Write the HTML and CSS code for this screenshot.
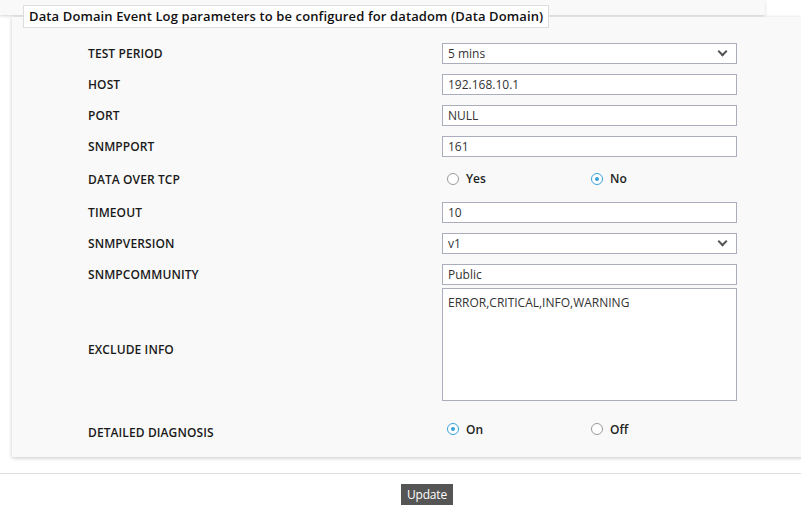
FILE: index.html
```html
<!DOCTYPE html>
<html lang="en">
<head>
    <meta charset="UTF-8">
    <title>Data Domain Event Log</title>
    <link rel="stylesheet" href="styles.css">
</head>
<body>
    <div class="prev-panel"></div>

    <div class="panel">
        <div class="legend">Data Domain Event Log parameters to be configured for datadom (Data Domain)</div>

        <div class="form">
            <div class="row">
                <label>TEST PERIOD</label>
                <div class="field">
                    <div class="select"><span>5 mins</span><i class="caret"></i></div>
                </div>
            </div>
            <div class="row">
                <label>HOST</label>
                <div class="field"><input type="text" value="192.168.10.1"></div>
            </div>
            <div class="row">
                <label>PORT</label>
                <div class="field"><input type="text" value="NULL"></div>
            </div>
            <div class="row">
                <label>SNMPPORT</label>
                <div class="field"><input type="text" value="161"></div>
            </div>
            <div class="row radio-row">
                <label>DATA OVER TCP</label>
                <div class="field radios">
                    <span class="radio"><i class="dot"></i>Yes</span>
                    <span class="radio"><i class="dot checked"></i>No</span>
                </div>
            </div>
            <div class="row">
                <label>TIMEOUT</label>
                <div class="field"><input type="text" value="10"></div>
            </div>
            <div class="row">
                <label>SNMPVERSION</label>
                <div class="field">
                    <div class="select"><span>v1</span><i class="caret"></i></div>
                </div>
            </div>
            <div class="row tight">
                <label>SNMPCOMMUNITY</label>
                <div class="field"><input type="text" value="Public"></div>
            </div>
            <div class="row area-row">
                <label>EXCLUDE INFO</label>
                <div class="field"><textarea>ERROR,CRITICAL,INFO,WARNING</textarea></div>
            </div>
            <div class="row diag-row">
                <label>DETAILED DIAGNOSIS</label>
                <div class="field radios">
                    <span class="radio"><i class="dot checked"></i>On</span>
                    <span class="radio"><i class="dot"></i>Off</span>
                </div>
            </div>
        </div>
    </div>

    <div class="actions">
        <button type="button">Update</button>
    </div>
</body>
</html>
```

FILE: styles.css
```css
* {
    margin: 0;
    padding: 0;
    box-sizing: border-box;
}

body {
    font-family: 'Open Sans', 'Segoe UI', sans-serif;
    font-size: 12px;
    color: #222;
    background: #fff;
    overflow: hidden;
}

.prev-panel {
    width: 765px;
    height: 15px;
    background: #f9f9f9;
    box-shadow: 0 1px 3px rgba(0,0,0,0.18);
}

.panel {
    position: relative;
    margin: 2px -20px 0 12px;
    background: #f9f9f9;
    box-shadow: 0 1px 4px rgba(0,0,0,0.22);
    padding: 26px 0 7px 76px;
}

.legend {
    position: absolute;
    left: 11px;
    top: -12px;
    height: 23px;
    line-height: 21px;
    padding: 0 5px;
    background: #fff;
    border: 1px solid #ddd;
    font-size: 13px;
    font-weight: 600;
    letter-spacing: 0.12px;
    color: #111;
}

.row {
    display: flex;
    align-items: center;
    height: 21px;
    margin-bottom: 10px;
}

.row label {
    width: 354px;
    font-weight: 600;
    letter-spacing: 0.1px;
    color: #1a1a1a;
}

.field {
    width: 295px;
}

input[type="text"], textarea, .select {
    display: block;
    width: 100%;
    height: 21px;
    border: 1px solid #aaadbb;
    background: #fff;
    font-family: inherit;
    font-size: 12px;
    color: #333;
    padding: 0 5px;
    outline: none;
}

.select {
    display: flex;
    align-items: center;
    justify-content: space-between;
    padding-right: 10px;
}

.caret {
    width: 7px;
    height: 7px;
    border-right: 2px solid #555;
    border-bottom: 2px solid #555;
    transform: rotate(45deg);
    margin-top: -4px;
}

.radio-row {
    height: 25px;
}

.radio-row .radios {
    margin-top: -2px;
}

.tight {
    margin-bottom: 3px;
}

.area-row {
    height: 113px;
    margin-bottom: 10px;
}

.area-row label {
    padding-top: 9px;
}

textarea {
    height: 113px;
    padding: 5px 5px;
    resize: none;
}

.diag-row {
    height: 39px;
    margin-bottom: 0;
}

.diag-row label {
    padding-top: 4px;
}

.diag-row .radios {
    margin-top: -3px;
}

.radios {
    display: flex;
    padding-left: 5px;
}

.radio {
    width: 144px;
    display: flex;
    align-items: center;
    font-weight: 600;
    color: #222;
}

.dot {
    width: 12px;
    height: 12px;
    border: 1px solid #999;
    border-radius: 50%;
    background: #fff;
    margin-right: 7px;
    position: relative;
}

.dot.checked {
    border-color: #3aa0d8;
}

.dot.checked::after {
    content: '';
    position: absolute;
    left: 3px;
    top: 3px;
    width: 4px;
    height: 4px;
    border-radius: 50%;
    background: #3aa0d8;
}

.actions {
    margin-top: 16px;
    border-top: 1px solid #ddd;
    padding: 10px 0 0 401px;
}

button {
    background: #555;
    color: #fff;
    border: none;
    height: 21px;
    padding: 0 6px;
    font-family: inherit;
    font-size: 12px;
    letter-spacing: -0.2px;
}
```
